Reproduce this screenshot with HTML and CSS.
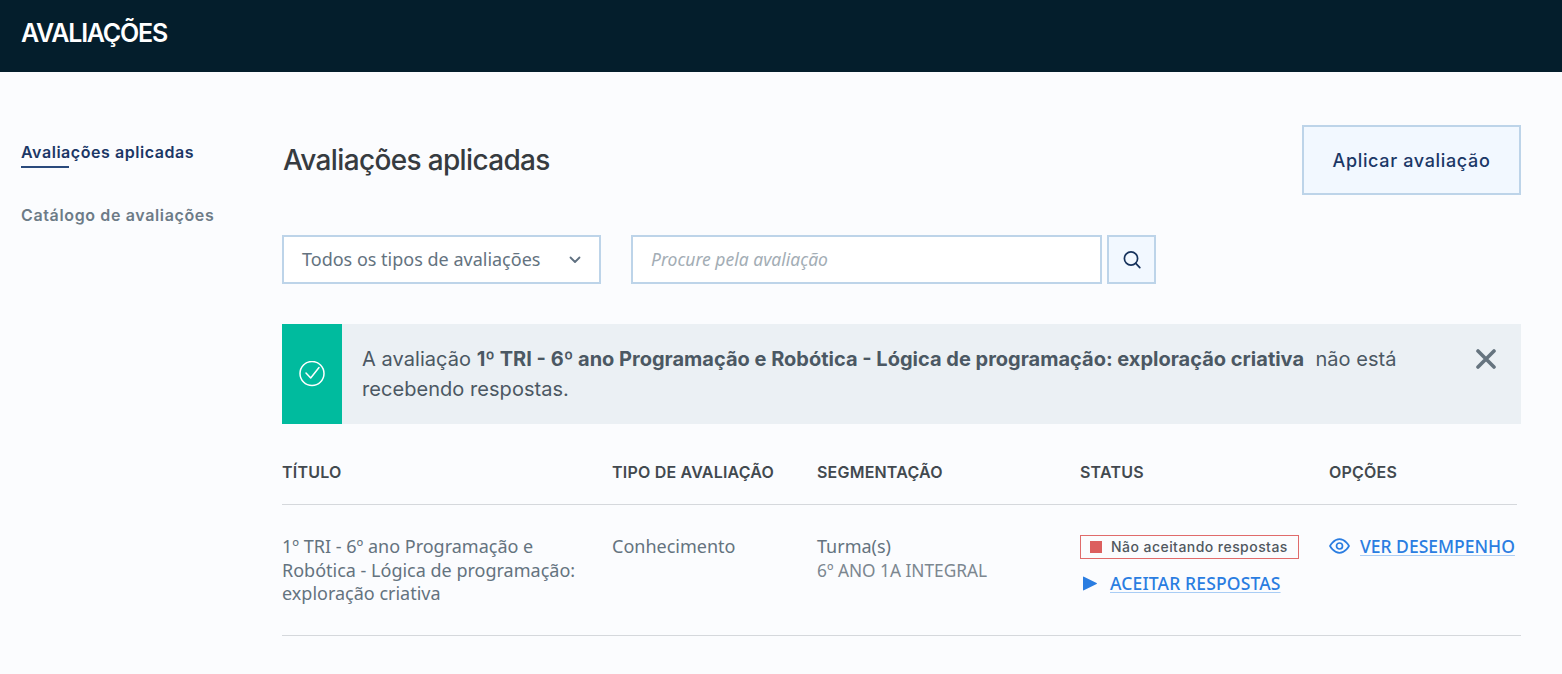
FILE: index.html
```html
<!DOCTYPE html>
<html lang="pt-BR">
<head>
<meta charset="utf-8">
<title>Avaliações</title>
<link rel="stylesheet" href="styles.css">
</head>
<body>
<header class="topbar"><h1 class="topbar-title">AVALIAÇÕES</h1></header>
<div class="page">
  <nav class="sidebar">
    <a class="side-link active">Avaliações aplicadas</a>
    <a class="side-link">Catálogo de avaliações</a>
  </nav>
  <main class="main">
    <div class="title-row">
      <h2 class="page-title">Avaliações aplicadas</h2>
      <button class="apply-btn">Aplicar avaliação</button>
    </div>
    <div class="filters">
      <div class="select">
        <span class="select-label">Todos os tipos de avaliações</span>
        <svg class="chev" width="12" height="8" viewBox="0 0 12 8"><path d="M1.500 1.500 6 6l4.500-4.500" fill="none" stroke="#5f7080" stroke-width="1.800" stroke-linecap="round" stroke-linejoin="round"/></svg>
      </div>
      <div class="search-input">Procure pela avaliação</div>
      <button class="search-btn">
        <svg width="18" height="18" viewBox="0 0 18 18"><circle cx="8" cy="7.500" r="6.600" fill="none" stroke="#16325c" stroke-width="1.700"/><path d="m12.800 12.300 4 4.300" stroke="#16325c" stroke-width="1.700" stroke-linecap="round"/></svg>
      </button>
    </div>
    <div class="alert">
      <div class="alert-icon">
        <svg width="26" height="26" viewBox="0 0 26 26"><circle cx="13" cy="12.500" r="12" fill="none" stroke="#fff" stroke-width="1.500"/><path d="m7 12 4.700 5L20 6.500" fill="none" stroke="#fff" stroke-width="1.500" stroke-linecap="round" stroke-linejoin="round"/></svg>
      </div>
      <p class="alert-text">A avaliação <strong>1º TRI - 6º ano Programação e Robótica - Lógica de programação: exploração criativa</strong> &nbsp;não está recebendo respostas.</p>
      <svg class="alert-close" width="20" height="20" viewBox="0 0 20 20"><path d="m2 2 16 16M18 2 2 18" stroke="#66747f" stroke-width="3.600" stroke-linecap="round"/></svg>
    </div>
    <div class="table-head">
      <div>TÍTULO</div>
      <div>TIPO DE AVALIAÇÃO</div>
      <div>SEGMENTAÇÃO</div>
      <div>STATUS</div>
      <div>OPÇÕES</div>
    </div>
    <div class="table-row">
      <div class="cell-title">1º TRI - 6º ano Programação e Robótica - Lógica de programação: exploração criativa</div>
      <div>Conhecimento</div>
      <div>Turma(s)<div class="cell-sub">6º ANO 1A INTEGRAL</div></div>
      <div class="status">
        <div class="badge"><i class="badge-dot"></i>Não aceitando respostas</div>
        <a class="action accept">
          <svg width="15" height="15" viewBox="0 0 15 15"><path d="M1 1.200v12.600a.6.6 0 0 0 .9.500L14.600 8a.6.6 0 0 0 0-1L1.900.700A.6.6 0 0 0 1 1.200z" fill="#2a7de1"/></svg>
          <span>ACEITAR RESPOSTAS</span>
        </a>
      </div>
      <div>
        <a class="action">
          <svg width="21" height="16" viewBox="0 0 21 16"><path d="M1 8s3.500-6.800 9.500-6.800S20 8 20 8s-3.500 6.800-9.500 6.800S1 8 1 8z" fill="none" stroke="#2a7de1" stroke-width="1.700" stroke-linejoin="round"/><circle cx="10.500" cy="8" r="3" fill="none" stroke="#2a7de1" stroke-width="1.700"/></svg>
          <span>VER DESEMPENHO</span>
        </a>
      </div>
    </div>
  </main>
</div>
</body>
</html>
```
FILE: styles.css
```css
* { box-sizing: border-box; }
html, body { margin: 0; padding: 0; }
body { background: #fbfcfe; height: 674px; overflow: hidden; font-family: "Noto Sans", sans-serif; color: #64737f; }
.topbar { height: 72px; background: #041e2c; padding: 0 21px 5px; display: flex; align-items: center; }
.topbar-title { margin: 0; font: 600 25px/1 Inter, sans-serif; letter-spacing: -1.2px; color: #fff; }
.page { display: flex; }
.sidebar { width: 282px; padding: 70px 0 0 21px; display: flex; flex-direction: column; flex: none; }
.side-link { font: 600 16px/20px Inter, sans-serif; letter-spacing: .64px; color: #6d7b87; align-self: flex-start; }
.side-link.active { color: #1b3766; position: relative; margin-bottom: 43px; letter-spacing: .55px; }
.side-link.active::after { content: ""; position: absolute; left: 0; top: 24px; width: 48px; height: 2px; background: #2a4a7c; }
.main { width: 1239px; padding-top: 53px; }
.title-row { display: flex; justify-content: space-between; align-items: center; height: 70px; }
.page-title { margin: 0; padding-left: 1px; font: 500 28px/1 Inter, sans-serif; letter-spacing: -.65px; color: #363b40; }
.apply-btn { width: 219px; height: 70px; background: #f2f8ff; border: 2px solid #bdd4e9; font: 500 18px/1 Inter, sans-serif; letter-spacing: .65px; color: #1b3766; padding: 2px 0 0; }
.filters { display: flex; margin-top: 40px; height: 49px; }
.select { width: 319px; border: 2px solid #bdd4e9; background: #fff; display: flex; align-items: center; justify-content: space-between; padding: 0 18px; font-size: 18px; color: #64737f; }
.select-label { margin-bottom: 2px; }
.search-input { width: 471px; margin-left: 30px; border: 2px solid #bdd4e9; background: #fff; display: flex; align-items: center; padding: 0 18px 2px; font-size: 17.500px; font-style: italic; color: #a3adb5; }
.search-btn { width: 49px; margin-left: 5px; border: 2px solid #bdd4e9; background: #f2f8ff; padding: 0; display: flex; align-items: center; justify-content: center; }
.alert { margin-top: 40px; height: 100px; background: #ebf0f4; display: flex; }
.alert-icon { width: 60px; background: #00bb9e; display: flex; align-items: center; justify-content: center; flex: none; }
.alert-text { margin: 0; padding: 20px 0 0 20px; width: 1094px; font: 400 20px/30px Inter, sans-serif; letter-spacing: .05px; color: #4b5863; }
.alert-text strong { font-weight: 700; letter-spacing: 0; }
.alert-close { margin: 25px 0 0 40px; }
.table-head, .table-row { display: grid; grid-template-columns: 330px 205px 263px 249px 1fr; }
.table-head { margin-top: 24px; height: 57px; width: 1235px; padding-top: 15px; border-bottom: 1px solid #d5d8dc; font: 600 16px/18px Inter, sans-serif; letter-spacing: .2px; color: #42494f; }
.table-row { padding-top: 30px; height: 131px; border-bottom: 1px solid #d5d8dc; font-size: 18px; line-height: 23.700px; color: #64737f; }
.cell-title { width: 300px; }
.cell-sub { color: #7c8790; font-size: 17.300px; }
.status { display: flex; flex-direction: column; align-items: flex-start; }
.badge { width: 219px; height: 24px; border: 1px solid #e06b6b; display: flex; align-items: center; font: 500 14px/1 Inter, sans-serif; letter-spacing: .45px; color: #50585f; padding: 0 0 1px 9px; gap: 9px; }
.badge-dot { width: 12px; height: 12px; background: #dc5f5f; }
.action { display: inline-flex; align-items: center; gap: 10px; color: #2a7de1; font-size: 17.500px; font-weight: 500; line-height: 22px; }
.action span { text-decoration: underline; text-decoration-color: #a9cdf5; text-underline-offset: 2px; }
.accept { margin-top: 13px; padding-left: 2px; gap: 13px; letter-spacing: .15px; }
```
